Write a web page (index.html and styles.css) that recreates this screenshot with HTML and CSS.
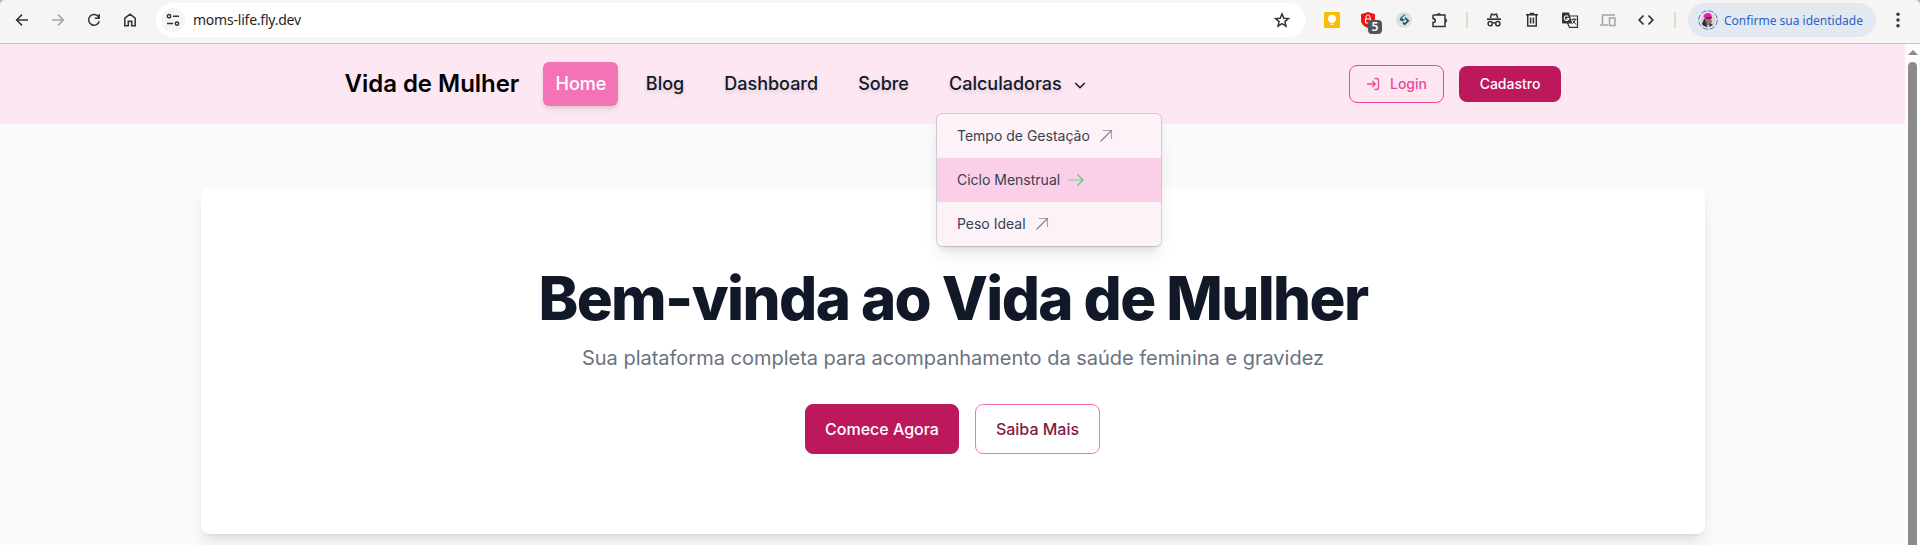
FILE: index.html
```html
<!DOCTYPE html>
<html lang="pt-BR">
<head>
<meta charset="utf-8">
<title>Vida de Mulher</title>
<link rel="stylesheet" href="styles.css">
</head>
<body>
<div class="toolbar">
  <span class="tool"><svg width="16" height="16" viewBox="0 0 16 16"><path d="M14 8H3M8 2.6 2.6 8 8 13.4"/></svg></span>
  <span class="tool tool-off"><svg width="16" height="16" viewBox="0 0 16 16"><path d="M2 8h11M8 2.6 13.4 8 8 13.4"/></svg></span>
  <span class="tool"><svg width="16" height="16" viewBox="0 0 16 16"><path d="M12.7 5A5.4 5.4 0 1 0 13.3 9.3M13.2 2v4.3H8.8"/></svg></span>
  <span class="tool"><svg width="16" height="16" viewBox="0 0 16 16"><path d="M2.8 13.8V6.2L8 2.2l5.2 4v7.6H9.7V9.3H6.3v4.5z"/></svg></span>
  <div class="omnibox">
    <span class="site-info"><svg width="14" height="14" viewBox="0 0 14 14"><circle cx="3" cy="3.3" r="1.7"/><path d="M7 3.3h6M1 10.6h6"/><circle cx="11" cy="10.6" r="1.7"/></svg></span>
    <span class="url">moms-life.fly.dev</span>
    <svg class="star" width="16" height="16" viewBox="0 0 16 16"><path d="m8 1.9 1.8 4.3 4.6.4-3.5 3 1.1 4.5-4-2.4-4 2.4 1.1-4.5-3.5-3 4.6-.4z"/></svg>
  </div>
  <span class="tool"><svg width="16" height="16" viewBox="0 0 16 16"><rect width="16" height="16" rx="1.5" fill="#fbbc04" stroke="none"/><circle cx="8" cy="6.8" r="4" fill="#fff" stroke="none"/><path d="M6.2 9h3.6v2H6.2zM6.2 11.8h3.6v1H6.2z" fill="#fff" stroke="none"/></svg></span>
  <span class="tool"><svg width="16" height="16" viewBox="0 0 16 16"><path d="M8 0 15 2.2V8c0 4-3 6.5-7 8-4-1.500-7-4-7-8V2.200z" fill="#f01515" stroke="none"/><path d="M6 7V5a2 2 0 0 1 4 0v2M5.500 7h5v4h-5z" stroke="#fff" stroke-width="1"/></svg><span class="count">5</span></span>
  <span class="tool"><svg width="16" height="16" viewBox="0 0 16 16"><circle cx="8" cy="8" r="8" fill="#dedfe1" stroke="none"/><path d="M8.800 2.500 4.800 6.200l3.700 2.300" stroke="#16a07c" stroke-width="1.600"/><path d="m4 7.300 3 1.500M9 5.800l3.200 3-3.700 3.700M7 10.500l1.800 2" stroke="#164d70" stroke-width="1.700"/></svg></span>
  <span class="tool"><svg class="puzzle" width="18" height="18" viewBox="0 0 18 18"><path d="M2 4h4.200M9.500 4H14v4.200M14 11v4.500H2v-4c2.800 0 3.200-3.700 0-4V4"/><path d="M6 4.300a1.900 1.900 0 0 1 3.800 0zM13.800 7.700a1.900 1.900 0 0 1 0 3.800z" fill="#303438" stroke-width=".8"/></svg></span>
  <span class="divider divider-a"></span>
  <span class="tool wide"><svg width="16" height="16" viewBox="0 0 16 16"><path d="M4.300 6 5.500 2.200l2.500.6 2.500-.6L11.700 6"/><path d="M1 7.200h14" stroke-width="1.700"/><circle cx="4.200" cy="11.700" r="2.100"/><circle cx="11.800" cy="11.700" r="2.100"/><path d="M6.300 11.200q1.700-.9 3.400 0"/></svg></span>
  <span class="tool wide"><svg width="16" height="16" viewBox="0 0 16 16"><path d="M2 2.700h12M5.800 1.500h4.400M3.700 3v11h8.600V3M6.600 5.500v6M9.400 5.500v6"/></svg></span>
  <span class="tool wide"><svg width="18" height="18" viewBox="0 0 18 18"><path d="M9 5h7.500V16.400H8.500L6.500 12" stroke-width="1.200"/><path d="M2 1.500h6l3.200 11H2a1 1 0 0 1-1-1v-9a1 1 0 0 1 1-1z" fill="#303438" stroke="none"/><path d="M7.300 5.600A2.300 2.300 0 1 0 7.800 7.600H5.600" stroke="#fff" stroke-width="1.100"/><path d="M10.500 8.300h5M13 7.200v1.100M14.500 8.500q-1 3-3.200 4M11.500 9.500l3.500 4" stroke-width="1"/></svg></span>
  <span class="tool wide tool-off"><svg width="18" height="16" viewBox="0 0 18 16"><path d="M3.500 12V3H16M1 13h8M10.500 6H16v7.500h-5.500z"/></svg></span>
  <span class="tool wide"><svg width="16" height="16" viewBox="0 0 16 16"><path d="M5.500 3.500 1.200 8l4.300 4.500M10.500 3.500 14.800 8l-4.300 4.500" stroke-width="1.800"/></svg></span>
  <span class="divider divider-b"></span>
  <div class="profile">
    <svg class="avatar" width="20" height="20" viewBox="0 0 20 20"><circle cx="10" cy="10" r="9.300" stroke="#5779ae" stroke-width="1" stroke-dasharray="5.500 1.800"/><circle cx="10" cy="10" r="7.500" fill="#d9d5d6" stroke="none"/><path d="M7 8h6l1 4-2 3H8.500z" fill="#a36e66" stroke="none"/><path d="M3.800 14 6.500 8l2 5 1 4.300a7.500 7.500 0 0 1-5.700-3.300zM12 13l3 2-4 2z" fill="#303040" stroke="none"/><path d="M5.500 7.500q-.2-4 4.500-4.500 4 .2 4 5z" fill="#f712b5" stroke="none"/><path d="M7 7.300h6.500v1.500H8z" fill="#382333" stroke="none"/></svg>
    <span>Confirme sua identidade</span>
  </div>
  <span class="menu"><svg width="4" height="16" viewBox="0 0 4 16"><g fill="#303438" stroke="none"><circle cx="2" cy="2.300" r="1.700"/><circle cx="2" cy="8" r="1.700"/><circle cx="2" cy="13.700" r="1.700"/></g></svg></span>
</div>
<div class="viewport">
  <div class="page">
    <header class="header">
      <div class="brand">Vida de Mulher</div>
      <nav class="nav">
        <a class="link active">Home</a>
        <a class="link">Blog</a>
        <a class="link">Dashboard</a>
        <a class="link">Sobre</a>
        <div class="dropdown">
          <a class="link">Calculadoras<svg class="chevron" width="16" height="16" viewBox="0 0 16 16"><path d="m3.300 6 4.700 4.700L12.700 6"/></svg></a>
          <div class="dropdown-menu">
            <a class="item">Tempo de Gestação<svg class="arrow" width="16" height="16" viewBox="0 0 16 16"><path d="M2.500 13.500 13.500 2.500"/><path class="soft" d="M5 2.500h8.500V11"/></svg></a>
            <a class="item current">Ciclo Menstrual<svg class="arrow" width="16" height="16" viewBox="0 0 16 16"><path class="soft" d="M0 8h15"/><path d="m9.500 2.500 5.500 5.500-5.500 5.500"/></svg></a>
            <a class="item">Peso Ideal<svg class="arrow" width="16" height="16" viewBox="0 0 16 16"><path d="M2.500 13.500 13.500 2.500"/><path class="soft" d="M5 2.500h8.500V11"/></svg></a>
          </div>
        </div>
      </nav>
      <div class="account">
        <a class="login"><svg width="14" height="14" viewBox="0 0 14 14"><path d="M1 7h8.500M6.300 4l3 3-3 3M8.500 1.500h2a2 2 0 0 1 2 2v7a2 2 0 0 1-2 2h-2"/></svg>Login</a>
        <a class="signup">Cadastro</a>
      </div>
    </header>
    <main class="main">
      <section class="hero">
        <h1 class="title">Bem-vinda ao Vida de Mulher</h1>
        <p class="lead">Sua plataforma completa para acompanhamento da saúde feminina e gravidez</p>
        <div class="actions">
          <a class="button primary">Comece Agora</a>
          <a class="button outline">Saiba Mais</a>
        </div>
      </section>
    </main>
  </div>
  <div class="scrollbar"><span class="scroll-up"></span><span class="scroll-thumb"></span></div>
</div>
</body>
</html>
```
FILE: styles.css
```css
* { box-sizing: border-box; }
body {
  margin: 0;
  height: 545px;
  overflow: hidden;
  background: #b9b8b5;
  font-family: Inter, "Liberation Sans", sans-serif;
}
svg { display: block; flex: none; fill: none; stroke: currentColor; stroke-width: 1.5; }

/* Browser toolbar */
.toolbar {
  display: flex;
  align-items: center;
  height: 44px;
  padding: 0 0 3px 4px;
  border-bottom: 1px solid #c7c2bf;
  border-radius: 5px 5px 0 0;
  background: #f6f5f4;
  color: #303438;
  font-family: "Noto Sans", sans-serif;
}
.tool { position: relative; display: flex; flex: none; justify-content: center; align-items: center; width: 36px; height: 34px; }
.wide { width: 38px; }
.tool-off { color: #a4a4a4; }
.omnibox {
  display: flex;
  flex: none;
  align-items: center;
  width: 1150px;
  height: 34px;
  margin: 0 8px;
  padding: 0 16px 0 5px;
  border-radius: 17px;
  background: #fff;
}
.site-info { display: grid; place-items: center; width: 24px; height: 24px; margin-right: 8px; border-radius: 50%; background: #f6f5f4; }
.url { color: #1f1f1f; font-size: 14px; line-height: 20px; letter-spacing: -.22px; }
.star { margin-left: auto; }
.count {
  position: absolute;
  left: 18px;
  top: 17px;
  width: 14px;
  height: 14px;
  border-radius: 4px;
  background: #555;
  color: #fff;
  font-size: 12px;
  font-weight: 600;
  line-height: 14px;
  text-align: center;
}
.divider { flex: none; width: 2px; height: 16px; background: #dcdad5; }
.divider-a { margin: 0 7px 0 8px; }
.divider-b { margin: 0 12px 0 9px; }
.profile {
  display: flex;
  flex: none;
  align-items: center;
  gap: 6px;
  width: 188px;
  height: 34px;
  padding-left: 10px;
  border-radius: 17px;
  background: #e4e9f1;
  color: #2563c4;
  font-size: 12px;
  white-space: nowrap;
}
.menu { display: flex; justify-content: center; width: 44px; }

/* Page area and scrollbar */
.viewport { display: flex; height: 501px; overflow: hidden; }
.page { width: 1905px; background: #f9fafc; }
.scrollbar { display: flex; flex-direction: column; align-items: center; width: 15px; padding-top: 6px; background: #fcfcfc; }
.scroll-up { flex: none; border: solid transparent; border-width: 0 5px 5px; border-bottom-color: #8b8b8b; }
.scroll-thumb { flex: 1; width: 9px; margin-top: 7px; border-radius: 5px 5px 0 0; background: #8b8b8b; }

/* Site header */
.header { display: flex; align-items: center; height: 80px; padding: 0 344px 0 344.5px; background: #fce7f3; }
.brand { width: 198.5px; color: #000; font-size: 24px; font-weight: 600; line-height: 32px; letter-spacing: -.03px; white-space: nowrap; }
.nav { display: flex; gap: 16px; }
.link {
  display: flex;
  align-items: center;
  height: 44px;
  padding: 0 12px;
  border-radius: 6px;
  color: #111827;
  font-size: 18px;
  font-weight: 500;
  line-height: 28px;
  text-shadow: 0 2px 4px rgba(0, 0, 0, .15);
}
.active { padding-right: 11.5px; padding-left: 12.5px; background: #f472b6; color: #fff; box-shadow: 0 4px 6px -1px rgba(0, 0, 0, .1), 0 2px 4px -2px rgba(0, 0, 0, .1); text-shadow: none; }
.chevron { margin: 1px 0 0 10px; }
.dropdown { position: relative; }
.dropdown-menu {
  position: absolute;
  top: 51px;
  left: -1px;
  z-index: 1;
  width: 226px;
  overflow: hidden;
  border: 1px solid rgba(0, 0, 0, .14);
  border-radius: 6px;
  background: #fdf2f8;
  background-clip: padding-box;
  box-shadow: 0 10px 15px -3px rgba(0, 0, 0, .1), 0 4px 6px -4px rgba(0, 0, 0, .1);
}
.item { display: flex; align-items: center; height: 44px; padding-left: 20px; color: #374151; font-size: 14px; line-height: 20px; white-space: nowrap; }
.current { background: #fbcfe8; }
.arrow { margin-left: 8px; color: #807c86; stroke-width: 1.1; }
.soft { opacity: .7; }
.current .arrow { color: #4fc777; }
.account { display: flex; align-items: center; gap: 15px; margin-left: auto; }
.login, .signup { display: flex; align-items: center; justify-content: center; border-radius: 8px; font-size: 14px; font-weight: 500; line-height: 20px; }
.login { gap: 10px; width: 95px; height: 38px; border: 1px solid #ec4899; color: #ec4899; }
.login svg { stroke-width: 1.3; }
.signup { width: 102px; height: 36px; background: #be185d; color: #fff; }

/* Hero */
.main { padding: 64px 200px 0 201px; }
.hero {
  display: flex;
  flex-direction: column;
  align-items: center;
  height: 346px;
  padding-top: 80px;
  border-radius: 8px;
  background: #fff;
  box-shadow: 0 10px 15px -3px rgba(0, 0, 0, .1), 0 4px 6px -4px rgba(0, 0, 0, .1);
}
.title { margin: 0; color: #111827; font-size: 60px; font-weight: 800; line-height: 60px; letter-spacing: -1.6px; white-space: nowrap; }
.lead { margin: 16px 0 0; color: #6b7280; font-size: 20px; line-height: 28px; letter-spacing: -.01px; white-space: nowrap; }
.actions { display: flex; gap: 16px; margin: 32px 1px 0 0; }
.button { display: flex; align-items: center; justify-content: center; height: 50px; border: 1px solid #be185d; border-radius: 8px; font-size: 16px; font-weight: 500; line-height: 24px; }
.primary { width: 154px; background: #be185d; color: #fff; }
.outline { width: 125px; border-color: #f472b6; color: #831843; }
```
